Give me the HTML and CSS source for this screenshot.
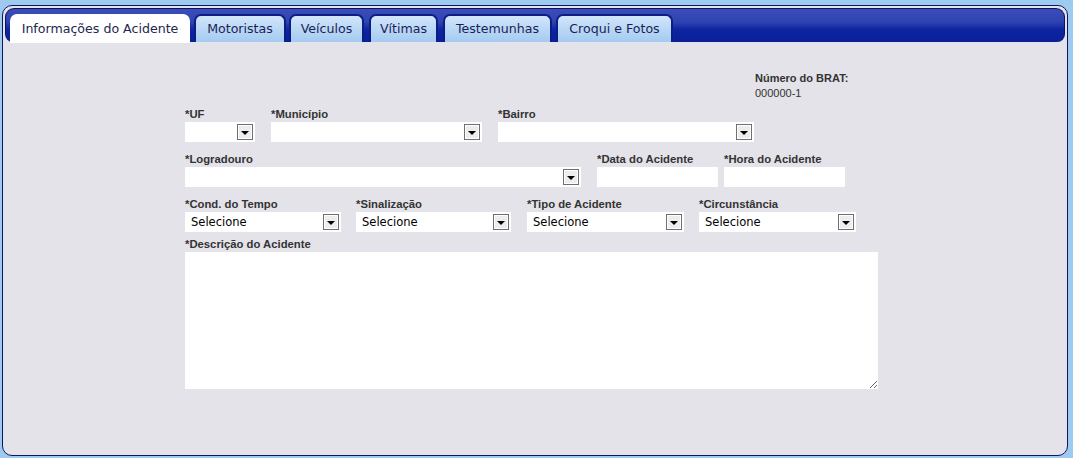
FILE: index.html
```html
<!DOCTYPE html>
<html lang="pt-BR">
<head>
<meta charset="utf-8">
<title>BRAT - Informações do Acidente</title>
<link rel="stylesheet" href="styles.css">
</head>
<body>
<div class="panel">
  <div class="tabbar">
    <div class="tab active t-info">Informações do Acidente</div>
    <div class="tab t-mot">Motoristas</div>
    <div class="tab t-vei">Veículos</div>
    <div class="tab t-vit">Vítimas</div>
    <div class="tab t-tes">Testemunhas</div>
    <div class="tab t-cro">Croqui e Fotos</div>
  </div>
  <div class="content">
    <div class="brat">
      <div class="brat-label">Número do BRAT:</div>
      <div class="brat-value">000000-1</div>
    </div>
    <div class="row row1">
      <div class="field w-uf"><label class="lbl">*UF</label><div class="select"><span class="btn"><i class="tri"></i></span></div></div>
      <div class="field w-mun"><label class="lbl">*Município</label><div class="select"><span class="btn"><i class="tri"></i></span></div></div>
      <div class="field w-bai"><label class="lbl">*Bairro</label><div class="select"><span class="btn"><i class="tri"></i></span></div></div>
    </div>
    <div class="row row2">
      <div class="field w-log"><label class="lbl">*Logradouro</label><div class="select"><span class="btn"><i class="tri"></i></span></div></div>
      <div class="field w-data"><label class="lbl">*Data do Acidente</label><div class="input"></div></div>
      <div class="field w-hora"><label class="lbl">*Hora do Acidente</label><div class="input"></div></div>
    </div>
    <div class="row row3">
      <div class="field w-cond"><label class="lbl">*Cond. do Tempo</label><div class="select"><span class="val">Selecione</span><span class="btn"><i class="tri"></i></span></div></div>
      <div class="field w-sin"><label class="lbl">*Sinalização</label><div class="select"><span class="val">Selecione</span><span class="btn"><i class="tri"></i></span></div></div>
      <div class="field w-tipo"><label class="lbl">*Tipo de Acidente</label><div class="select"><span class="val">Selecione</span><span class="btn"><i class="tri"></i></span></div></div>
      <div class="field w-circ"><label class="lbl">*Circunstância</label><div class="select"><span class="val">Selecione</span><span class="btn"><i class="tri"></i></span></div></div>
    </div>
    <div class="row row4">
      <div class="field w-desc"><label class="lbl">*Descrição do Acidente</label><textarea class="textarea"></textarea></div>
    </div>
  </div>
</div>
</body>
</html>
```
FILE: styles.css
```css
html, body {
  margin: 0;
  padding: 0;
}
body {
  background: #9ecaf0;
  width: 1073px;
  height: 458px;
  overflow: hidden;
  font-family: "Liberation Sans", Arial, sans-serif;
}
.panel {
  box-sizing: border-box;
  margin: 5px 5px 0 2px;
  width: 1066px;
  height: 451px;
  border: 1px solid #0b1766;
  border-radius: 10px;
  padding: 2px;
  background: #e3e3e9;
}
.tabbar {
  box-sizing: border-box;
  height: 34px;
  border: 1px solid #0a145e;
  border-bottom: none;
  border-radius: 9px 9px 8px 8px;
  background: linear-gradient(#3a4db9 0%, #3044b1 38%, #0e25a1 62%, #0a1f98 100%);
  display: flex;
  align-items: flex-end;
  padding: 0 0 0 4px;
}
.tab {
  box-sizing: border-box;
  height: 28px;
  padding: 0;
  border: 2px solid #0d1d86;
  border-bottom: none;
  border-radius: 7px 7px 0 0;
  background: linear-gradient(#d2e6fb 0%, #bcd9f7 45%, #a4cbf0 100%);
  font-family: "DejaVu Sans", Verdana, sans-serif;
  font-size: 12.6px;
  line-height: 26px;
  text-align: center;
  color: #1c1f55;
  white-space: nowrap;
}
.tab.active {
  background: #ffffff;
  border-color: #ffffff;
  height: 29px;
  margin-bottom: -1px;
  color: #23264f;
}
.t-info { width: 180px; margin-right: 4px; }
.t-mot { width: 92px; margin-right: 3px; }
.t-vei { width: 75px; margin-right: 5px; }
.t-vit { width: 69px; margin-right: 5px; }
.t-tes { width: 109px; margin-right: 4px; }
.t-cro { width: 117px; }
.content {
  padding: 29px 0 0 180px;
}
.brat {
  margin-left: 570px;
  font-size: 11px;
  line-height: 15px;
  color: #333;
}
.brat-label {
  font-weight: bold;
}
.row {
  display: flex;
}
.row1 {
  margin-top: 7px;
  gap: 16px;
}
.row2 {
  margin-top: 11px;
}
.row3 {
  margin-top: 11px;
}
.row4 {
  margin-top: 6px;
}
.field {
  display: flex;
  flex-direction: column;
}
.lbl {
  display: block;
  font-size: 11.3px;
  font-weight: bold;
  line-height: 13px;
  height: 14px;
  color: #333;
  white-space: nowrap;
}
.select, .input {
  position: relative;
  box-sizing: border-box;
  height: 20px;
  background: #ffffff;
}
.select .val {
  display: block;
  padding-left: 6px;
  font-family: "DejaVu Sans", Verdana, sans-serif;
  font-size: 11.5px;
  line-height: 20px;
  color: #000;
}
.btn {
  position: absolute;
  right: 2px;
  top: 2px;
  box-sizing: border-box;
  width: 16px;
  height: 16px;
  border: 1px solid #6f6f6f;
  background: #ededed;
  box-shadow: inset 0 0 0 1px #ffffff;
}
.tri {
  position: absolute;
  left: 3px;
  top: 6px;
  width: 0;
  height: 0;
  border-left: 4px solid transparent;
  border-right: 4px solid transparent;
  border-top: 4px solid #000;
}
.w-uf { width: 70px; }
.w-mun { width: 211px; }
.w-bai { width: 256px; }
.w-log { width: 396px; margin-right: 16px; }
.w-data { width: 121px; margin-right: 6px; }
.w-hora { width: 121px; }
.w-cond { width: 156px; margin-right: 15px; }
.w-sin { width: 155px; margin-right: 16px; }
.w-tipo { width: 157px; margin-right: 15px; }
.w-circ { width: 157px; }
.w-desc { width: 693px; }
.textarea {
  box-sizing: border-box;
  display: block;
  width: 693px;
  height: 137px;
  margin: 0;
  border: none;
  outline: none;
  background: #ffffff;
  padding: 2px;
  font-family: "DejaVu Sans", Verdana, sans-serif;
  font-size: 12px;
}
```
